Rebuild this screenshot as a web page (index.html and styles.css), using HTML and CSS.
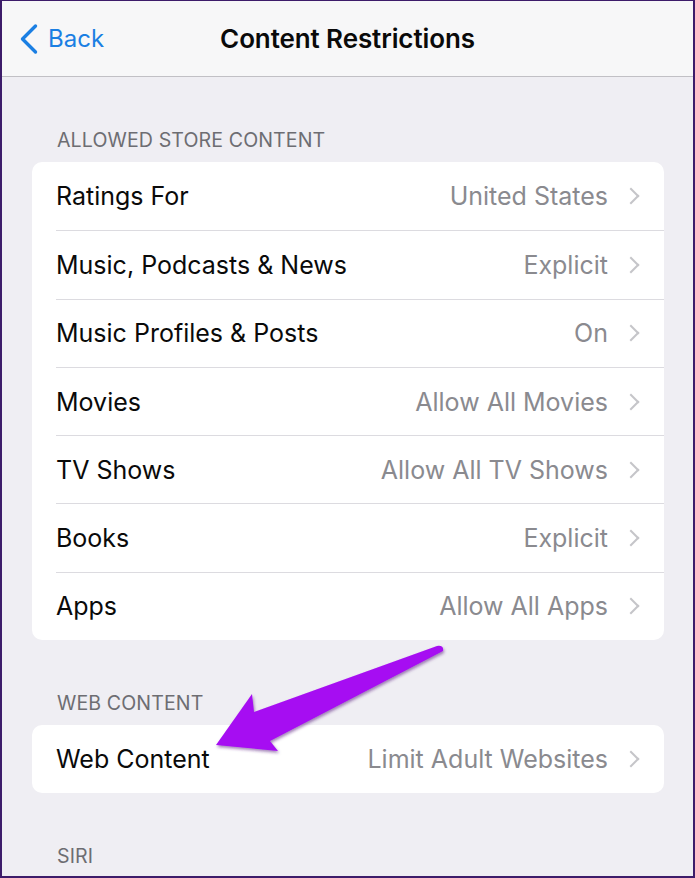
FILE: index.html
```html
<!DOCTYPE html>
<html>
<head>
<meta charset="utf-8">
<link rel="stylesheet" href="styles.css">
</head>
<body>
<div class="frame">
  <header class="nav">
    <div class="back">
      <svg class="back-chevron" width="20" height="32" viewBox="0 0 20 32"><path d="M16.5 3 L3.5 16 L16.5 29" fill="none" stroke="#1b7fe3" stroke-width="3.4" stroke-linecap="round" stroke-linejoin="round"/></svg>
      <span class="back-label">Back</span>
    </div>
    <div class="nav-title">Content Restrictions</div>
    <div class="nav-spacer"></div>
  </header>

  <div class="section-title">ALLOWED STORE CONTENT</div>
  <div class="card">
    <div class="row"><span class="label">Ratings For</span><span class="value">United States</span><span class="chev"></span></div>
    <div class="row"><span class="label">Music, Podcasts &amp; News</span><span class="value">Explicit</span><span class="chev"></span></div>
    <div class="row"><span class="label">Music Profiles &amp; Posts</span><span class="value">On</span><span class="chev"></span></div>
    <div class="row"><span class="label">Movies</span><span class="value">Allow All Movies</span><span class="chev"></span></div>
    <div class="row"><span class="label">TV Shows</span><span class="value">Allow All TV Shows</span><span class="chev"></span></div>
    <div class="row"><span class="label">Books</span><span class="value">Explicit</span><span class="chev"></span></div>
    <div class="row"><span class="label">Apps</span><span class="value">Allow All Apps</span><span class="chev"></span></div>
  </div>

  <div class="section-title">WEB CONTENT</div>
  <div class="card">
    <div class="row"><span class="label">Web Content</span><span class="value">Limit Adult Websites</span><span class="chev"></span></div>
  </div>

  <div class="section-title">SIRI</div>

  <svg class="arrow" width="695" height="878" viewBox="0 0 695 878">
    <defs>
      <filter id="sh" x="-20%" y="-20%" width="140%" height="140%">
        <feDropShadow dx="1" dy="2" stdDeviation="1.5" flood-color="#5a1a80" flood-opacity="0.55"/>
      </filter>
    </defs>
    <path filter="url(#sh)" fill="#a60cf2" d="M437 646 Q444 645 443 651 L270 741 L278 751 L216 745 L252 694 L254 712 Z"/>
  </svg>
</div>
</body>
</html>
```

FILE: styles.css
```css
html, body {
  margin: 0;
  padding: 0;
}
body {
  font-family: Inter, "Liberation Sans", Arial, sans-serif;
  -webkit-font-smoothing: antialiased;
}
.frame {
  position: relative;
  width: 695px;
  height: 878px;
  box-sizing: border-box;
  border: 2px solid #3d1c6a;
  border-top-width: 1px;
  background: #efeef3;
  overflow: hidden;
}
.nav {
  height: 76px;
  box-sizing: border-box;
  background: #f7f7f8;
  border-bottom: 1px solid #c1c0c5;
  display: grid;
  grid-template-columns: 1fr auto 1fr;
  align-items: center;
}
.back {
  display: flex;
  align-items: center;
  gap: 9px;
  padding-left: 17px;
  color: #1b7fe3;
}
.back-chevron {
  display: block;
  margin-top: 1px;
}
.back-label {
  font-size: 24px;
}
.nav-title {
  font-size: 26px;
  font-weight: 600;
  color: #0a0a0a;
  letter-spacing: -0.1px;
}
.section-title {
  margin: 51px 0 10px;
  padding-left: 55px;
  height: 24px;
  line-height: 24px;
  font-size: 19.6px;
  color: #6d6d72;
  letter-spacing: 0.1px;
}
.card {
  margin: 0 29px 0 30px;
  background: #ffffff;
  border-radius: 10px;
  padding-left: 24px;
}
.row {
  height: 68.3px;
  box-sizing: border-box;
  display: flex;
  align-items: center;
  padding-right: 23px;
}
.row + .row {
  border-top: 1px solid #dcdbe0;
}
.label {
  flex: 1;
  font-size: 25px;
  color: #0a0a0a;
}
.value {
  font-size: 25px;
  color: #8a8a8f;
  margin-right: 17px;
}
.chev {
  width: 10px;
  height: 10px;
  border-top: 2.2px solid #c5c5c9;
  border-right: 2.2px solid #c5c5c9;
  transform: rotate(45deg);
  margin-right: 4px;
}
.arrow {
  position: absolute;
  left: -2px;
  top: -1px;
  pointer-events: none;
}
```
